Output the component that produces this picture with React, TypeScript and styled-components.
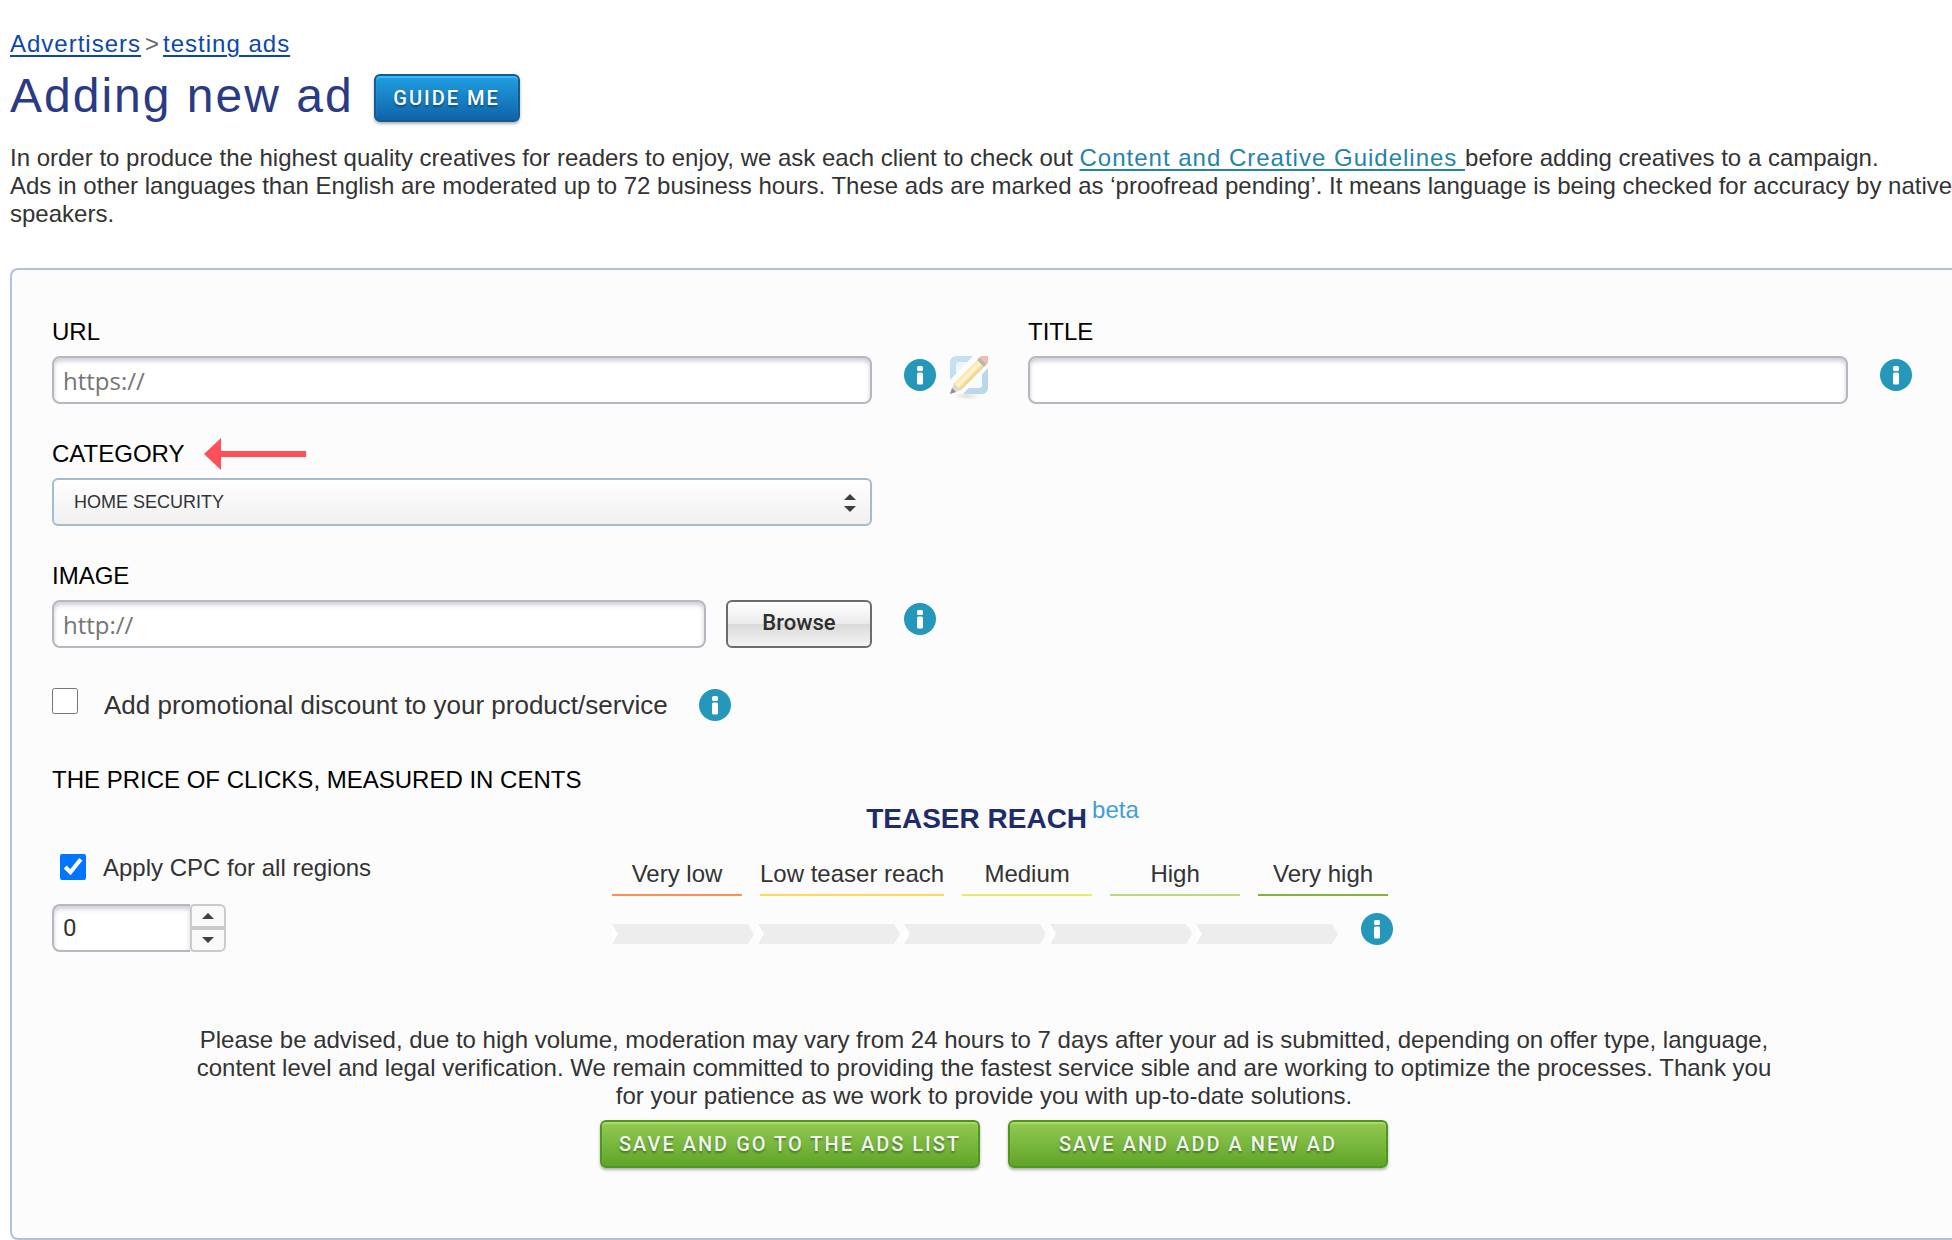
import React, { useId, useState } from "react";
import styled, { createGlobalStyle } from "styled-components";

const sans = `Arial, "Liberation Sans", sans-serif`;
const humanist = `"Open Sans", "Noto Sans", sans-serif`;
const grotesk = `Roboto, "Liberation Sans", sans-serif`;

const GlobalStyle = createGlobalStyle`
  *, *::before, *::after { box-sizing: border-box; }
  body {
    margin: 0;
    background: #fff;
    color: #333;
    font: 24px/28px ${sans};
  }
`;

const Page = styled.main`
  padding: 30px 0 0 10px;
  overflow-x: clip;
`;

const Breadcrumb = styled.nav`
  display: flex;
  gap: 4px;
  color: #666;
`;

const TextLink = styled.a<{ $tone?: "teal" }>`
  color: ${(p) => (p.$tone === "teal" ? "#2484a8" : "#0d47ad")};
  letter-spacing: 1px;
  text-decoration: underline;
  text-decoration-thickness: 2px;
  text-underline-offset: 3px;
`;

const TitleRow = styled.header`
  display: flex;
  align-items: center;
  gap: 20px;
  margin: 10px 0 20px;
`;

const Title = styled.h1`
  margin: 0;
  color: #2b3a84;
  font-size: 48px;
  font-weight: 400;
  line-height: 56px;
  letter-spacing: 2px;
`;

const ActionButton = styled.button<{ $tone: "blue" | "green" }>`
  min-width: ${(p) => (p.$tone === "blue" ? "146px" : "380px")};
  height: 48px;
  padding: 0 16px;
  border: 2px solid ${(p) => (p.$tone === "blue" ? "#145c90" : "#509422")};
  border-radius: 6px;
  background: ${(p) =>
    p.$tone === "blue"
      ? "linear-gradient(#209fe2, #1063a8)"
      : "linear-gradient(#93c954, #5fa527)"};
  box-shadow:
    inset 0 2px 1px ${(p) => (p.$tone === "blue" ? "#35bdf8" : "#acdc62")},
    0 2px 3px rgba(0, 0, 0, 0.3);
  color: ${(p) => (p.$tone === "blue" ? "#fff" : "#f0f4ee")};
  font: 500 20px/28px ${grotesk};
  letter-spacing: 2px;
  text-shadow: 0 2px 2px rgba(0, 0, 0, 0.35);
  white-space: nowrap;
  cursor: pointer;
`;

const GuideButton = styled(ActionButton)`
  margin-top: 4px;
`;

const Intro = styled.p`
  margin: 0 -8px 40px 0;
`;

const Panel = styled.form`
  padding: 48px 36px 70px 40px;
  border: 2px solid #b3c2dc;
  border-right: 0;
  border-radius: 8px 0 0 8px;
  background: #fcfcfc;
`;

const Fields = styled.div`
  display: grid;
  grid-template-columns: 39fr 37fr;
  gap: 36px 40px;
`;

const Field = styled.div`
  grid-column-start: 1;
  & + &[data-column="second"] {
    grid-column-start: 2;
  }
`;

const LabelRow = styled.div`
  display: flex;
  align-items: center;
  gap: 20px;
  height: 28px;
  margin-bottom: 10px;
`;

const Label = styled.label`
  color: #000;
`;

const ControlRow = styled.div<{ $aside: number }>`
  display: grid;
  grid-template-columns: minmax(0, 1fr) ${(p) => p.$aside}px;
  column-gap: 32px;
`;

const Aside = styled.div`
  display: flex;
  align-items: flex-start;
  gap: 14px;
`;

const TextInput = styled.input`
  width: 100%;
  min-width: 0;
  height: 48px;
  padding: 0 9px;
  border: 2px solid #b8b7c1;
  border-radius: 8px;
  outline: none;
  background: #fff;
  box-shadow: inset 0 3px 4px rgba(90, 90, 120, 0.3);
  color: #333;
  font: 24px/28px ${humanist};
  &::placeholder {
    color: #757575;
    opacity: 1;
  }
`;

const SelectBox = styled.div`
  position: relative;
  svg {
    position: absolute;
    top: 16px;
    right: 16px;
    pointer-events: none;
  }
`;

const Select = styled.select`
  width: 100%;
  height: 48px;
  padding: 0 20px;
  border: 2px solid #a5bbcf;
  border-radius: 6px;
  appearance: none;
  background: linear-gradient(#fff, #f0f0f0);
  color: #333;
  font: 18px/24px ${sans};
`;

const FileRow = styled.div`
  display: flex;
  gap: 20px;
`;

const BrowseButton = styled.button`
  flex: 0 0 146px;
  height: 48px;
  padding: 0 0 2px;
  border: 2px solid #6c6c6c;
  border-radius: 6px;
  background: linear-gradient(#fff, #ebebeb 50%, #dadada 50%, #f3f3f3);
  color: #2e2e2e;
  font: 500 22px/28px ${grotesk};
  cursor: pointer;
`;

const IconButton = styled.button`
  display: block;
  flex: none;
  padding: 0;
  border: 0;
  background: none;
  cursor: pointer;
  svg {
    display: block;
  }
`;

const InfoButton = styled(IconButton)`
  margin-top: 3px;
`;

const Checkbox = styled.input`
  flex: none;
  width: 26px;
  height: 26px;
  margin: 0;
  accent-color: #0075ff;
`;

const PromoRow = styled.div`
  display: flex;
  align-items: flex-start;
  margin: 40px 0 44px;
  font-size: 26px;
  line-height: 34px;
  label {
    margin: 0 31px 0 26px;
  }
  ${IconButton} {
    align-self: center;
    margin: 0;
  }
`;

const SectionTitle = styled.h2`
  margin: 0;
  color: #000;
  font-size: 24px;
  font-weight: 400;
`;

const PriceRow = styled.section`
  display: flex;
`;

const Bid = styled.div`
  flex: 0 0 560px;
  padding-top: 60px;
`;

const RegionRow = styled.div`
  display: flex;
  gap: 17px;
  margin: 0 0 22px 8px;
`;

const Spinner = styled.div`
  display: flex;
  width: 174px;
`;

const SpinnerInput = styled(TextInput)`
  flex: 1;
  border-right: 0;
  border-radius: 8px 0 0 8px;
  font-family: ${grotesk};
`;

const SpinnerButtons = styled.div`
  display: grid;
  flex: 0 0 36px;
  grid-template-rows: 1fr 1fr;
`;

const StepButton = styled.button`
  display: grid;
  place-items: center;
  padding: 0;
  border: 2px solid #cbcbcf;
  border-radius: 0 0 6px 4px;
  background: #f9f9f9;
  &:first-child {
    border-radius: 4px 6px 0 0;
  }
`;

const Reach = styled.div`
  padding-top: 9px;
`;

const ReachTitle = styled.h3`
  margin: 0 0 25px;
  color: #1f2c6c;
  font-size: 28px;
  line-height: 32px;
  text-align: center;
`;

const Beta = styled.span`
  margin-left: 5px;
  color: #419fdb;
  font-size: 24px;
  font-weight: 400;
  line-height: 0;
  vertical-align: 10px;
`;

const Scale = styled.ul`
  display: flex;
  gap: 18px;
  margin: 0 0 17px;
  padding: 0;
  list-style: none;
`;

const ScaleItem = styled.li<{ $color: string }>`
  min-width: 130px;
  height: 36px;
  border-bottom: 2px solid ${(p) => p.$color};
  text-align: center;
  white-space: nowrap;
`;

const Meter = styled.div`
  display: flex;
  gap: 4px;
  svg {
    display: block;
  }
`;

const MeterRow = styled.div`
  display: flex;
  gap: 23px;
  ${Meter} {
    padding-top: 11px;
  }
  ${IconButton} {
    margin: 0;
  }
`;

const Notice = styled.p`
  max-width: 1600px;
  margin: 74px auto 10px;
  text-align: center;
`;

const Actions = styled.div`
  display: flex;
  justify-content: center;
  gap: 28px;
  padding-left: 20px;
`;

function Info({ topic }: { topic: string }) {
  return (
    <InfoButton type="button" aria-label={topic}>
      <svg width="32" height="32" viewBox="0 0 32 32">
        <circle cx="16" cy="16" r="16" fill="#2497ba" />
        <rect x="13" y="7" width="6" height="5" rx="1.5" fill="#fff" />
        <rect x="13" y="13.5" width="6" height="12" rx="1.5" fill="#fff" />
      </svg>
    </InfoButton>
  );
}

function PencilIcon() {
  return (
    <svg width="38" height="44" viewBox="0 0 38 44">
      <defs>
        <linearGradient id="frame" x1="0" y1="0" x2="1" y2="1">
          <stop offset="0" stopColor="#c9e2f1" />
          <stop offset="1" stopColor="#b5d5ea" />
        </linearGradient>
        <linearGradient id="sheet" x1="0" y1="0" x2="1" y2="1">
          <stop offset="0" stopColor="#eef5fa" />
          <stop offset="1" stopColor="#fbfdfe" />
        </linearGradient>
        <radialGradient id="shade">
          <stop offset="0" stopColor="#dedede" />
          <stop offset="1" stopColor="#fcfcfc" />
        </radialGradient>
      </defs>
      <ellipse cx="17" cy="40" rx="13" ry="4" fill="url(#shade)" />
      <path d="M6 0H32a6 6 0 0 1 6 6V32a6 6 0 0 1-6 6H6a6 6 0 0 1-6-6V6a6 6 0 0 1 6-6z" fill="url(#frame)" />
      <path d="M9 6H29a3 3 0 0 1 3 3V29a3 3 0 0 1-3 3H9a3 3 0 0 1-3-3V9a3 3 0 0 1 3-3z" fill="url(#sheet)" />
      <path d="M0 24L23 0h15v12L13 38H0z" fill="#fcfcfc" />
      <path d="M4 27L27 4l7 7L11 34z" fill="#fbeab5" />
      <path d="M6 29L29 6l2 2L8 31z" fill="#fff3cb" />
      <path d="M9 32L32 9l2 2L11 34z" fill="#eed99c" />
      <path d="M4 27l7 7L0 38z" fill="#e2dacb" />
      <path d="M2 32l4 4L0 38z" fill="#8f8f8f" />
      <path d="M27 4l3-3 7 7-3 3z" fill="#b9b7b1" />
      <path d="M30 1l1-1h7v7l-1 1z" fill="#f3bcae" />
    </svg>
  );
}

function Caret({ down }: { down?: boolean }) {
  return (
    <svg width="12" height="6" viewBox="0 0 12 6">
      <path d={down ? "M0 0h12L6 6z" : "M0 6h12L6 0z"} fill="#3f3f3f" />
    </svg>
  );
}

const reachLevels = [
  { name: "Very low", color: "#ff8f56" },
  { name: "Low teaser reach", color: "#ffdb59" },
  { name: "Medium", color: "#e7eb66" },
  { name: "High", color: "#b9da80" },
  { name: "Very high", color: "#85b13f" },
];

export default function App() {
  const id = useId();
  const [bid, setBid] = useState(0);
  const [allRegions, setAllRegions] = useState(true);

  return (
    <>
      <GlobalStyle />
      <Page>
        <Breadcrumb aria-label="Breadcrumb">
          <TextLink href="#advertisers">Advertisers</TextLink>
          <span>&gt;</span>
          <TextLink href="#campaign">testing ads</TextLink>
        </Breadcrumb>
        <TitleRow>
          <Title>Adding new ad</Title>
          <GuideButton type="button" $tone="blue">GUIDE ME</GuideButton>
        </TitleRow>
        <Intro>
          In order to produce the highest quality creatives for readers to enjoy, we ask each client to check out{" "}
          <TextLink href="#guidelines" $tone="teal">Content and Creative Guidelines </TextLink>
          before adding creatives to a campaign.
          <br />
          Ads in other languages than English are moderated up to 72 business hours. These ads are marked as
          ‘proofread pending’. It means language is being checked for accuracy by native speakers.
        </Intro>

        <Panel onSubmit={(e) => e.preventDefault()}>
          <Fields>
            <Field>
              <LabelRow>
                <Label htmlFor={`${id}-url`}>URL</Label>
              </LabelRow>
              <ControlRow $aside={84}>
                <TextInput id={`${id}-url`} type="text" placeholder="https://" />
                <Aside>
                  <Info topic="About the URL" />
                  <IconButton type="button" aria-label="Edit URL">
                    <PencilIcon />
                  </IconButton>
                </Aside>
              </ControlRow>
            </Field>
            <Field data-column="second">
              <LabelRow>
                <Label htmlFor={`${id}-title`}>TITLE</Label>
              </LabelRow>
              <ControlRow $aside={36}>
                <TextInput id={`${id}-title`} type="text" />
                <Aside>
                  <Info topic="About the title" />
                </Aside>
              </ControlRow>
            </Field>
            <Field>
              <LabelRow>
                <Label htmlFor={`${id}-category`}>CATEGORY</Label>
                <svg width="102" height="32" viewBox="0 0 102 32">
                  <path d="M0 16L17 0V13H102V19H17V32z" fill="#ff4f58" />
                </svg>
              </LabelRow>
              <ControlRow $aside={84}>
                <SelectBox>
                  <Select id={`${id}-category`} defaultValue="home">
                    <option value="home">HOME SECURITY</option>
                  </Select>
                  <svg width="12" height="18" viewBox="0 0 12 18">
                    <path d="M0 6h12L6 0zM0 12h12L6 18z" fill="#3f3f3f" />
                  </svg>
                </SelectBox>
              </ControlRow>
            </Field>
            <Field>
              <LabelRow>
                <Label htmlFor={`${id}-image`}>IMAGE</Label>
              </LabelRow>
              <ControlRow $aside={84}>
                <FileRow>
                  <TextInput id={`${id}-image`} type="text" placeholder="http://" />
                  <BrowseButton type="button">Browse</BrowseButton>
                </FileRow>
                <Aside>
                  <Info topic="About the image" />
                </Aside>
              </ControlRow>
            </Field>
          </Fields>

          <PromoRow>
            <Checkbox id={`${id}-promo`} type="checkbox" />
            <label htmlFor={`${id}-promo`}>Add promotional discount to your product/service</label>
            <Info topic="About promotional discounts" />
          </PromoRow>

          <SectionTitle>THE PRICE OF CLICKS, MEASURED IN CENTS</SectionTitle>
          <PriceRow>
            <Bid>
              <RegionRow>
                <Checkbox
                  id={`${id}-regions`}
                  type="checkbox"
                  checked={allRegions}
                  onChange={(e) => setAllRegions(e.target.checked)}
                />
                <label htmlFor={`${id}-regions`}>Apply CPC for all regions</label>
              </RegionRow>
              <Spinner>
                <SpinnerInput
                  type="text"
                  inputMode="numeric"
                  aria-label="Price per click in cents"
                  value={bid}
                  onChange={(e) => setBid(Number(e.target.value) || 0)}
                />
                <SpinnerButtons>
                  <StepButton type="button" aria-label="Increase" onClick={() => setBid(bid + 1)}>
                    <Caret />
                  </StepButton>
                  <StepButton type="button" aria-label="Decrease" onClick={() => setBid(Math.max(0, bid - 1))}>
                    <Caret down />
                  </StepButton>
                </SpinnerButtons>
              </Spinner>
            </Bid>
            <Reach>
              <ReachTitle>
                TEASER REACH<Beta>beta</Beta>
              </ReachTitle>
              <Scale>
                {reachLevels.map((level) => (
                  <ScaleItem key={level.name} $color={level.color}>{level.name}</ScaleItem>
                ))}
              </Scale>
              <MeterRow>
                <Meter>
                  {reachLevels.map((level) => (
                    <svg key={level.name} width="142" height="20" viewBox="0 0 142 20">
                      <path d="M0 0L6 10L0 20z" fill="#fff" />
                      <path d="M0 0H136L142 10L136 20H0L6 10z" fill="#ededed" />
                    </svg>
                  ))}
                </Meter>
                <Info topic="About teaser reach" />
              </MeterRow>
            </Reach>
          </PriceRow>

          <Notice>
            Please be advised, due to high volume, moderation may vary from 24 hours to 7 days after your ad is
            submitted, depending on offer type, language, content level and legal verification. We remain committed
            to providing the fastest service sible and are working to optimize the processes. Thank you for your
            patience as we work to provide you with up-to-date solutions.
          </Notice>
          <Actions>
            <ActionButton type="submit" $tone="green">SAVE AND GO TO THE ADS LIST</ActionButton>
            <ActionButton type="submit" $tone="green">SAVE AND ADD A NEW AD</ActionButton>
          </Actions>
        </Panel>
      </Page>
    </>
  );
}
